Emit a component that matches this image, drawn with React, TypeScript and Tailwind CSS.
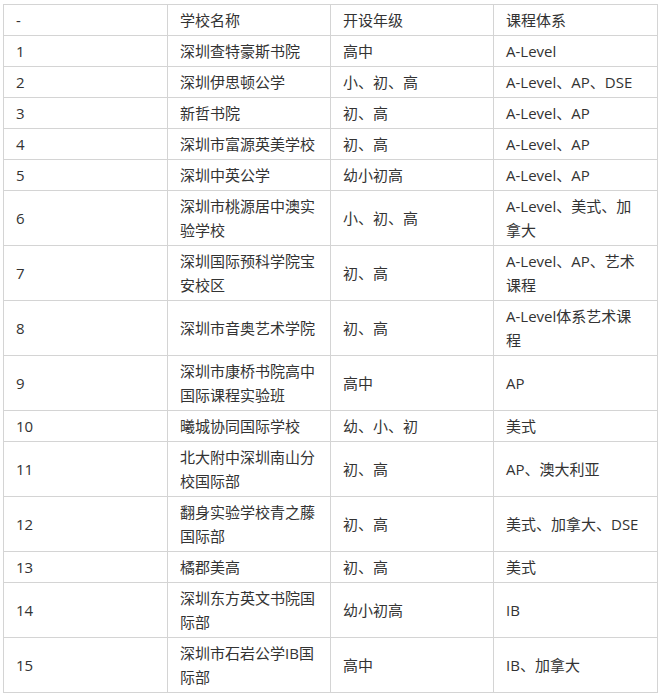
const rows: [string, string[], string, string[]][] = [
  ['1', ['深圳查特豪斯书院'], '高中', ['A-Level']],
  ['2', ['深圳伊思顿公学'], '小、初、高', ['A-Level、AP、DSE']],
  ['3', ['新哲书院'], '初、高', ['A-Level、AP']],
  ['4', ['深圳市富源英美学校'], '初、高', ['A-Level、AP']],
  ['5', ['深圳中英公学'], '幼小初高', ['A-Level、AP']],
  ['6', ['深圳市桃源居中澳实', '验学校'], '小、初、高', ['A-Level、美式、加', '拿大']],
  ['7', ['深圳国际预科学院宝', '安校区'], '初、高', ['A-Level、AP、艺术', '课程']],
  ['8', ['深圳市音奥艺术学院'], '初、高', ['A-Level体系艺术课', '程']],
  ['9', ['深圳市康桥书院高中', '国际课程实验班'], '高中', ['AP']],
  ['10', ['曦城协同国际学校'], '幼、小、初', ['美式']],
  ['11', ['北大附中深圳南山分', '校国际部'], '初、高', ['AP、澳大利亚']],
  ['12', ['翻身实验学校青之藤', '国际部'], '初、高', ['美式、加拿大、DSE']],
  ['13', ['橘郡美高'], '初、高', ['美式']],
  ['14', ['深圳东方英文书院国', '际部'], '幼小初高', ['IB']],
  ['15', ['深圳市石岩公学IB国', '际部'], '高中', ['IB、加拿大']],
]

function Lines({ parts }: { parts: string[] }) {
  return (
    <>
      {parts.map((p, i) => (
        <span key={i}>
          {i > 0 && <br />}
          {p}
        </span>
      ))}
    </>
  )
}

const cell = 'border border-[#d4d4d4] px-[12px] py-[3px] align-middle'

export default function App() {
  return (
    <div className="min-h-[696px] bg-white pt-[4px] pl-[3px] font-['Open_Sans','Noto_Sans_CJK_SC',sans-serif] text-[15px] leading-[24px] text-[#333333]">
      <table className="w-[655px] table-fixed border-collapse">
        <colgroup>
          <col className="w-[164px]" />
          <col className="w-[163px]" />
          <col className="w-[163px]" />
          <col className="w-[164px]" />
        </colgroup>
        <tbody>
          <tr>
            <td className={cell}>-</td>
            <td className={cell}>学校名称</td>
            <td className={cell}>开设年级</td>
            <td className={cell}>课程体系</td>
          </tr>
          {rows.map(([n, name, grade, course]) => (
            <tr key={n}>
              <td className={cell}>{n}</td>
              <td className={cell}>
                <Lines parts={name} />
              </td>
              <td className={cell}>{grade}</td>
              <td className={cell}>
                <Lines parts={course} />
              </td>
            </tr>
          ))}
        </tbody>
      </table>
    </div>
  )
}
